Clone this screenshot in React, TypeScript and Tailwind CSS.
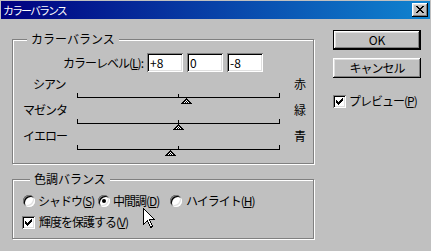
import React from "react";

// classic win9x bevels
const raised =
  "shadow-[inset_-1px_-1px_#000,inset_1px_1px_#fff,inset_-2px_-2px_#808080,inset_2px_2px_#dfdfdf]";
const sunken =
  "shadow-[inset_1px_1px_#808080,inset_-1px_-1px_#fff,inset_2px_2px_#000,inset_-2px_-2px_#dfdfdf]";

const CHECK = ["......X", ".....XX", "X...XXX", "XX.XXX.", "XXXXX..", ".XXX...", "..X...."];
const CLOSE = ["XX....XX", ".XX..XX.", "..XXXX..", "...XX...", "..XXXX..", ".XX..XX.", "XX....XX"];

function PixelGlyph({ rows, color = "#000" }: { rows: string[]; color?: string }) {
  return (
    <svg width={rows[0].length} height={rows.length} shapeRendering="crispEdges">
      {rows.map((row, y) =>
        row.split("").map((c, x) =>
          c === "X" ? <rect key={`${x}-${y}`} x={x} y={y} width={1} height={1} fill={color} /> : null
        )
      )}
    </svg>
  );
}

function Thumb() {
  const px: React.ReactNode[] = [];
  for (let r = 0; r < 6; r++) {
    for (let x = 5 - r; x <= 5 + r; x++) {
      const edge = x === 5 - r || x === 5 + r || r === 5;
      const dark = edge || (x + r) % 2 === 0;
      px.push(<rect key={`${x}-${r}`} x={x} y={r} width={1} height={1} fill={dark ? "#000" : "#fff"} />);
    }
  }
  return (
    <svg width={11} height={6} shapeRendering="crispEdges">
      {px}
    </svg>
  );
}

function GroupBox({
  title,
  titleLeft,
  className,
  children,
}: {
  title: string;
  titleLeft: string;
  className: string;
  children: React.ReactNode;
}) {
  return (
    <div className={`relative border border-[#808080] shadow-[inset_1px_1px_#fff,1px_1px_#fff] ${className}`}>
      <div className={`absolute top-[-8px] ${titleLeft} bg-[#c0c0c0] px-[4px]`}>{title}</div>
      {children}
    </div>
  );
}

function Slider({ left, right, value, labelPad }: { left: string; right: string; value: number; labelPad: string }) {
  const pos = Math.round(((value + 100) / 200) * 202) - 5;
  return (
    <div>
      <div className={`flex h-[14px] items-center justify-between pr-[7px] ${labelPad}`}>
        <span className="tracking-[-1px]">{left}</span>
        <span>{right}</span>
      </div>
      <div className="relative ml-[64px] mt-[2px] h-[10px] w-[203px]">
        <div className="relative h-[5px] border-x border-b border-black">
          <div className="absolute left-[100px] top-px h-[4px] w-px bg-black" />
        </div>
        <div className="absolute top-[5px] flex" style={{ left: pos }}>
          <Thumb />
        </div>
      </div>
    </div>
  );
}

function Checkbox() {
  return (
    <div className={`flex h-[13px] w-[13px] shrink-0 items-center justify-center bg-white ${sunken}`}>
      <PixelGlyph rows={CHECK} />
    </div>
  );
}

function Radio({ checked }: { checked?: boolean }) {
  return (
    <div
      className={`flex h-[12px] w-[12px] shrink-0 items-center justify-center rounded-full bg-white ${sunken}`}
    >
      {checked && <div className="h-[4px] w-[4px] rounded-full bg-black" />}
    </div>
  );
}

function Field({ value }: { value: string }) {
  return <div className={`flex h-[19px] w-[36px] items-center bg-white pl-[3px] ${sunken}`}>{value}</div>;
}

export default function App() {
  return (
    <div className="relative h-[251px] w-[431px] overflow-hidden bg-[#c0c0c0] pl-px pt-px font-['Noto_Sans_CJK_JP',sans-serif] text-[12px] leading-[14px] text-black">
      {/* title bar */}
      <div className="flex h-[18px] w-[429px] items-center justify-between bg-[linear-gradient(to_right,#000080,#1084d0)] pl-[2px] pr-[2px]">
        <span className="text-[11px] tracking-[-2px] text-white">カラーバランス</span>
        <div className={`flex h-[14px] w-[16px] items-center justify-center bg-[#c0c0c0] pb-px pr-px ${raised}`}>
          <PixelGlyph rows={CLOSE} />
        </div>
      </div>

      <div className="flex">
        <div className="ml-[11px] w-[302px]">
          <GroupBox title="カラーバランス" titleLeft="left-[14px]" className="mt-[20px] h-[125px]">
            <div className="flex items-center pt-[13px]">
              <div className="mr-[4px] w-[130px] text-right tracking-[-1px]">
                カラーレベル(<span className="underline">L</span>):
              </div>
              <div className="flex gap-[4px]">
                <Field value="+8" />
                <Field value="0" />
                <Field value="-8" />
              </div>
            </div>
            <div className="mt-[5px]">
              <Slider left="シアン" right="赤" value={8} labelPad="pl-[20px]" />
              <Slider left="マゼンタ" right="緑" value={0} labelPad="pl-[10px]" />
              <Slider left="イエロー" right="青" value={-8} labelPad="pl-[10px]" />
            </div>
          </GroupBox>

          <GroupBox title="色調バランス" titleLeft="left-[17px]" className="mt-[15px] h-[60px]">
            <div className="flex h-[14px] items-center pl-[10px] pt-0 tracking-[-1px] mt-[14px]">
              <Radio />
              <span className="ml-[3px] w-[60px]">
                シャドウ(<span className="underline">S</span>)
              </span>
              <Radio checked />
              <span className="ml-[3px] w-[57px]">
                中間調(<span className="underline">D</span>)
              </span>
              <Radio />
              <span className="ml-[4px]">
                ハイライト(<span className="underline">H</span>)
              </span>
            </div>
            <div className="mt-[7px] flex h-[14px] items-center pl-[9px] tracking-[-1px]">
              <Checkbox />
              <span className="ml-[4px]">
                輝度を保護する(<span className="underline">V</span>)
              </span>
            </div>
          </GroupBox>
        </div>

        <div className="ml-[19px] w-[88px]">
          <div
            className={`mt-[11px] flex h-[20px] items-center justify-center border border-black bg-[#c0c0c0] ${raised}`}
          >
            OK
          </div>
          <div className={`mt-[8px] flex h-[20px] items-center justify-center bg-[#c0c0c0] tracking-[-1px] ${raised}`}>
            キャンセル
          </div>
          <div className="mt-[16px] flex h-[14px] items-center tracking-[-1px]">
            <Checkbox />
            <span className="ml-[3px]">
              プレビュー(<span className="underline">P</span>)
            </span>
          </div>
        </div>
      </div>

      {/* mouse pointer */}
      <svg className="absolute left-[143px] top-[208px]" width={13} height={21} shapeRendering="crispEdges">
        <path d="M0.5 0.5 L0.5 16.5 L4.5 12.5 L7.5 19.5 L9.5 18.5 L6.5 11.5 L11.5 11.5 Z" fill="#fff" stroke="#000" />
      </svg>
    </div>
  );
}
